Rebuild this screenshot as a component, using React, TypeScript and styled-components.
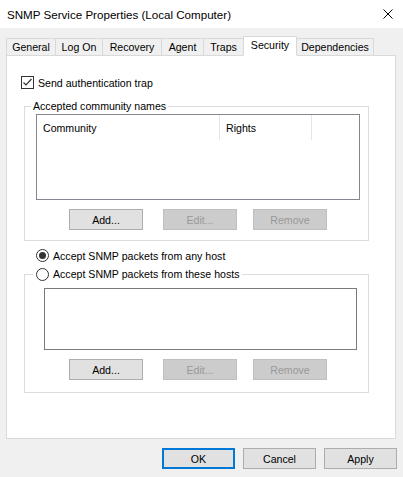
import React from 'react';
import styled, { createGlobalStyle } from 'styled-components';

const GlobalStyle = createGlobalStyle`
  html, body {
    margin: 0;
    padding: 0;
    background: #f0f0f0;
  }
  body {
    font-family: "Liberation Sans", Arial, sans-serif;
    font-size: 10.6px;
    color: #000;
  }
  * {
    box-sizing: border-box;
  }
`;

const Window = styled.div`
  width: 403px;
  height: 477px;
  background: #f0f0f0;
  display: flex;
  flex-direction: column;
  overflow: hidden;
`;

const TitleBar = styled.div`
  height: 28px;
  flex: none;
  background: #fff;
  display: flex;
  align-items: center;
  justify-content: space-between;
  padding: 0 10px 0 7px;
  font-size: 11.6px;
`;

const TabStrip = styled.div`
  display: flex;
  align-items: flex-end;
  height: 20px;
  margin: 8px 0 -1px 6px;
  position: relative;
  z-index: 1;
`;

const Tab = styled.div<{ $width: number; $active?: boolean }>`
  width: ${p => p.$width}px;
  height: ${p => (p.$active ? 20 : 18)}px;
  margin-left: -1px;
  border: 1px solid #d9d9d9;
  border-bottom-color: ${p => (p.$active ? '#fff' : '#d9d9d9')};
  background: ${p => (p.$active ? '#fff' : '#f0f0f0')};
  display: flex;
  align-items: center;
  justify-content: center;
  padding-bottom: ${p => (p.$active ? 3 : 0)}px;
  position: relative;
  z-index: ${p => (p.$active ? 2 : 1)};
  white-space: nowrap;

  &:first-child {
    margin-left: 0;
  }
`;

const Panel = styled.div`
  margin-left: 6px;
  width: 390px;
  height: 384px;
  flex: none;
  background: #fff;
  border: 1px solid #d9d9d9;
  padding-top: 20px;
  display: flex;
  flex-direction: column;
`;

const OptionRow = styled.label<{ $ml?: number; $mt?: number }>`
  display: inline-flex;
  align-items: center;
  gap: 4px;
  height: 13px;
  margin-left: ${p => p.$ml ?? 0}px;
  margin-top: ${p => p.$mt ?? 0}px;
  white-space: nowrap;
`;

const CheckBox = styled.span`
  width: 13px;
  height: 13px;
  border: 1px solid #333;
  background: #fff;
  display: flex;
  align-items: center;
  justify-content: center;
  flex: none;
`;

const Radio = styled.span<{ $checked?: boolean }>`
  width: 13px;
  height: 13px;
  border: 1px solid #333;
  border-radius: 50%;
  background: #fff;
  display: flex;
  align-items: center;
  justify-content: center;
  flex: none;

  &::after {
    content: '';
    display: ${p => (p.$checked ? 'block' : 'none')};
    width: 7px;
    height: 7px;
    border-radius: 50%;
    background: #333;
  }
`;

const GroupBox = styled.fieldset<{ $mt: number; $pad: string }>`
  margin: ${p => p.$mt}px 0 0 17px;
  width: 345px;
  min-width: 0;
  border: 1px solid #dcdcdc;
  padding: ${p => p.$pad};
`;

const Legend = styled.legend<{ $lh: number; $pad: string }>`
  line-height: ${p => p.$lh}px;
  height: ${p => p.$lh}px;
  padding: ${p => p.$pad};
  display: flex;
  align-items: center;
`;

const ListView = styled.div`
  margin-left: 5px;
  width: 324px;
  height: 86px;
  border: 1px solid #828790;
  background: #fff;
`;

const ListHeader = styled.div`
  display: grid;
  grid-template-columns: 183px 92px;
  height: 25px;
`;

const HeaderCell = styled.div`
  border-right: 1px solid #e5e5e5;
  padding-left: 6px;
  display: flex;
  align-items: center;
`;

const ListBox = styled.div`
  margin: 7px 0 0 11px;
  width: 313px;
  height: 62px;
  border: 1px solid #7a7a7a;
  background: #fff;
`;

const ButtonRow = styled.div<{ $indent: number }>`
  display: flex;
  margin-top: 9px;
  padding-left: ${p => p.$indent}px;
`;

const Button = styled.button<{ $width?: number; $ml?: number; $default?: boolean }>`
  width: ${p => p.$width ?? 74}px;
  height: 21px;
  margin-left: ${p => p.$ml ?? 0}px;
  padding: 0;
  font: inherit;
  color: #000;
  background: #e1e1e1;
  border: ${p => (p.$default ? '2px solid #0078d7' : '1px solid #adadad')};
  border-radius: 0;
  display: flex;
  align-items: center;
  justify-content: center;

  &:disabled {
    background: #cccccc;
    border-color: #bfbfbf;
    color: #999999;
  }
`;

const Footer = styled.div`
  display: flex;
  justify-content: flex-end;
  gap: 8px;
  padding: 9px 6px 0 0;
`;

const tabs = [
  { label: 'General', width: 50 },
  { label: 'Log On', width: 48 },
  { label: 'Recovery', width: 60 },
  { label: 'Agent', width: 43 },
  { label: 'Traps', width: 41 },
  { label: 'Security', width: 54, active: true },
  { label: 'Dependencies', width: 78 },
];

const CloseIcon = () => (
  <svg width="10" height="10" viewBox="0 0 10 10">
    <path d="M0.5 0.5L9.5 9.5M9.5 0.5L0.5 9.5" stroke="#000" strokeWidth="1" fill="none" />
  </svg>
);

const CheckMark = () => (
  <svg width="11" height="11" viewBox="0 0 11 11">
    <path d="M1.5 5.5L4 8L9.5 2" stroke="#333" strokeWidth="1.2" fill="none" />
  </svg>
);

const App: React.FC = () => {
  return (
    <Window>
      <GlobalStyle />
      <TitleBar>
        <span>SNMP Service Properties (Local Computer)</span>
        <CloseIcon />
      </TitleBar>

      <TabStrip>
        {tabs.map(t => (
          <Tab key={t.label} $width={t.width} $active={t.active}>
            {t.label}
          </Tab>
        ))}
      </TabStrip>

      <Panel>
        <OptionRow $ml={14}>
          <CheckBox>
            <CheckMark />
          </CheckBox>
          Send authentication trap
        </OptionRow>

        <GroupBox $mt={9} $pad="0 8px 10px 6px">
          <Legend $lh={16} $pad="0 2px">Accepted community names</Legend>
          <ListView>
            <ListHeader>
              <HeaderCell>Community</HeaderCell>
              <HeaderCell>Rights</HeaderCell>
            </ListHeader>
          </ListView>
          <ButtonRow $indent={38}>
            <Button>Add...</Button>
            <Button $ml={20} disabled>Edit...</Button>
            <Button $ml={16} disabled>Remove</Button>
          </ButtonRow>
        </GroupBox>

        <OptionRow $ml={29} $mt={8}>
          <Radio $checked />
          Accept SNMP packets from any host
        </OptionRow>

        <GroupBox $mt={5} $pad="0 11px 12px 8px">
          <Legend $lh={14} $pad="0 3px">
            <OptionRow>
              <Radio />
              Accept SNMP packets from these hosts
            </OptionRow>
          </Legend>
          <ListBox />
          <ButtonRow $indent={36}>
            <Button>Add...</Button>
            <Button $ml={20} disabled>Edit...</Button>
            <Button $ml={16} disabled>Remove</Button>
          </ButtonRow>
        </GroupBox>
      </Panel>

      <Footer>
        <Button $width={73} $default>OK</Button>
        <Button $width={73}>Cancel</Button>
        <Button $width={73}>Apply</Button>
      </Footer>
    </Window>
  );
};

export default App;
